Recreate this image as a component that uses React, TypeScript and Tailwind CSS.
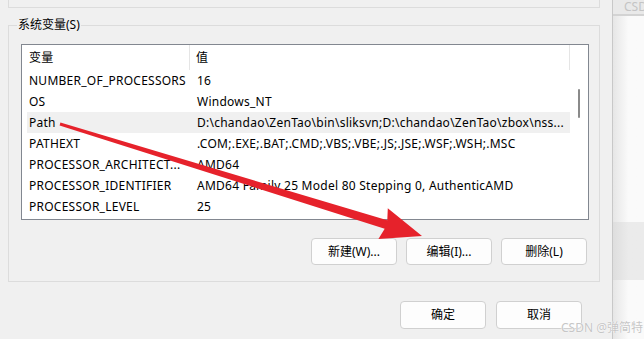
import React from 'react';

const rows = [
  { name: 'NUMBER_OF_PROCESSORS', value: '16' },
  { name: 'OS', value: 'Windows_NT' },
  { name: 'Path', value: 'D:\\chandao\\ZenTao\\bin\\sliksvn;D:\\chandao\\ZenTao\\zbox\\nss...', active: true },
  { name: 'PATHEXT', value: '.COM;.EXE;.BAT;.CMD;.VBS;.VBE;.JS;.JSE;.WSF;.WSH;.MSC' },
  { name: 'PROCESSOR_ARCHITECT...', value: 'AMD64' },
  { name: 'PROCESSOR_IDENTIFIER', value: 'AMD64 Family 25 Model 80 Stepping 0, AuthenticAMD' },
  { name: 'PROCESSOR_LEVEL', value: '25' },
];

function WinButton({ label, className = '' }: { label: string; className?: string }) {
  return (
    <button className={`w-[86px] h-[27px] bg-[#fdfdfd] border border-[#d0d0d0] rounded-[4px] text-[12px] text-black flex items-center justify-center ${className}`}>
      {label}
    </button>
  );
}

export default function App() {
  return (
    <div
      className="relative w-[644px] h-[339px] bg-[#f0f0f0] flex overflow-hidden text-black"
      style={{ fontFamily: '"Noto Sans", "Noto Sans CJK SC", sans-serif' }}
    >
      {/* dialog */}
      <div className="w-[612px] h-full flex flex-col">
        <div className="ml-[8px] w-[592px] h-[8px] border-l border-r border-b border-[#dcdcdc]" />

        <div className="relative ml-[8px] mt-[17px] w-[592px] h-[257px] border border-[#dcdcdc] flex flex-col">
          <span className="absolute -top-[9px] left-[8px] bg-[#f0f0f0] px-[1px] text-[12px] leading-[16px]">系统变量(S)</span>

          <div className="ml-[12px] mt-[18px] w-[568px] h-[176px] border border-[#828790] bg-white flex">
            <div className="flex-1 flex flex-col pl-[5px] tracking-[0.25px]">
              <div className="h-[25px] flex items-center text-[12px]">
                <div className="w-[163px] h-full pl-[2px] flex items-center border-r border-[#e5e5e5]">变量</div>
                <div className="flex-1 h-full pl-[6px] flex items-center border-r border-[#e5e5e5]">值</div>
              </div>
              {rows.map((r) => (
                <div
                  key={r.name}
                  className={`h-[21px] flex items-center text-[12px] whitespace-nowrap ${r.active ? 'bg-[#f0f0f0]' : ''}`}
                >
                  <div className="w-[163px] pl-[2px] overflow-hidden">{r.name}</div>
                  <div className="flex-1 pl-[7px] overflow-hidden">{r.value}</div>
                </div>
              ))}
            </div>
            <div className="w-[18px] flex justify-center pt-[44px]">
              <div className="w-[2px] h-[29px] bg-[#8a8a8a] rounded-full" />
            </div>
          </div>

          <div className="mt-[18px] mr-[12px] flex justify-end gap-[9px]">
            <WinButton label="新建(W)..." />
            <WinButton label="编辑(I)..." />
            <WinButton label="删除(L)" />
          </div>
        </div>

        <div className="mt-[19px] mr-[30px] flex justify-end gap-[10px]">
          <WinButton label="确定" className="w-[85px] h-[28px]" />
          <WinButton label="取消" className="w-[85px] h-[28px]" />
        </div>
      </div>

      {/* neighbouring window */}
      <div className="w-[32px] h-full flex flex-col border-l border-[#c8c8c8]">
        <div className="h-[14px] bg-[#e9e9e9] text-[12px] leading-[14px] text-[#c4c4c4] pl-[11px] whitespace-nowrap">CSD</div>
        <div className="h-[2px] bg-[#d3d3d3]" />
        <div className="h-[206px] bg-gradient-to-r from-[#e6e6e6] via-[#fafafa] to-[#fafafa]" />
        <div className="h-[58px] bg-gradient-to-r from-[#dedede] via-[#ebebeb] to-[#ebebeb]" />
        <div className="flex-1 bg-gradient-to-r from-[#e6e6e6] via-[#fafafa] to-[#fafafa]" />
      </div>

      {/* annotation arrow */}
      <svg className="absolute inset-0 pointer-events-none" width="644" height="339" viewBox="0 0 644 339">
        <polygon
          fill="#e6222b"
          points="60.4,122.6 387.3,220.2 387.8,208.3 422,236 378.4,238.9 384.7,228.8 59.6,125.4"
        />
      </svg>

      <div
        className="absolute left-[561px] top-[320px] text-[12px] leading-[16px] text-[#c6c6c6] whitespace-nowrap"
        style={{ textShadow: '0 0 1px #fff, 0 0 1px #fff' }}
      >
        CSDN @弹简特
      </div>
    </div>
  );
}
